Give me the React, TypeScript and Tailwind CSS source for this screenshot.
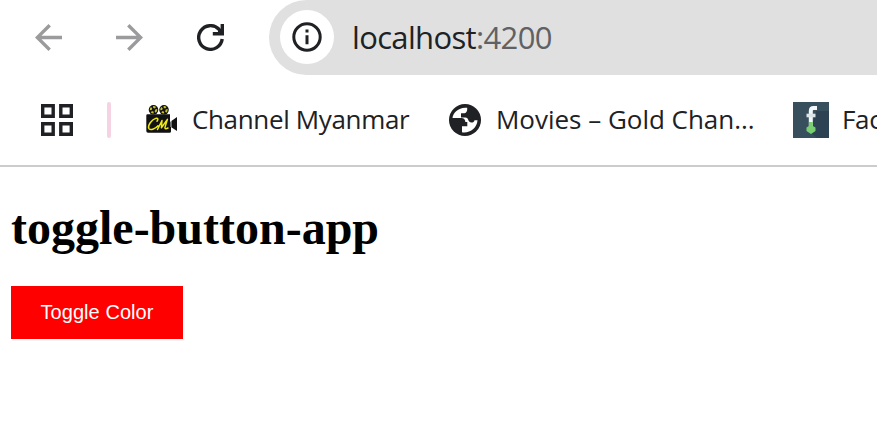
import { useState } from "react";

const uiFont = "font-['Open_Sans','Noto_Sans',sans-serif]";

function ArrowIcon({ flipped = false }: { flipped?: boolean }) {
  return (
    <svg viewBox="4 4 16 16" className={`size-[27px] shrink-0 fill-[#9b9b9d] ${flipped ? "-scale-x-100" : ""}`}>
      <path d="M20 11H7.83l5.59-5.59L12 4l-8 8 8 8 1.41-1.41L7.83 13H20v-2z" />
    </svg>
  );
}

function ReloadIcon() {
  return (
    <svg viewBox="0 0 27 27" className="size-[27px] shrink-0" fill="none" stroke="#202124" strokeWidth="3.4">
      <path d="M25.2 15A11.8 11.8 0 1 1 22 5.3L25 8.8" />
      <path d="M25.3 0V9.7H15.8" />
      <path d="M21 5L25 9H21Z" fill="#202124" stroke="none" />
    </svg>
  );
}

function InfoIcon() {
  return (
    <svg viewBox="0 0 30 30" className="size-[30px]" fill="none" stroke="#202124" strokeWidth="3">
      <circle cx="15" cy="15" r="13.2" />
      <path d="M15 13.3V22.2M15 7.6V10.6" />
    </svg>
  );
}

function AppsIcon() {
  return (
    <svg viewBox="0 0 32 32" className="size-8 shrink-0" fill="none" stroke="#202124" strokeWidth="3.4">
      <path d="M1.7 1.7H12.2V12.2H1.7ZM19.8 1.7H30.3V12.2H19.8ZM1.7 19.8H12.2V30.3H1.7ZM19.8 19.8H30.3V30.3H19.8Z" />
    </svg>
  );
}

function CameraIcon() {
  return (
    <svg viewBox="0 0 32 28" className="mb-0.5 h-7 w-8 shrink-0">
      <g fill="#111">
        <circle cx="7.5" cy="4.8" r="4.8" />
        <circle cx="18" cy="4.8" r="4.8" />
        <path d="M1.5 9.2H24V17L31 12V26L25 22V26.5Q25 27.8 23.5 27.8H2Q.3 27.8.3 26V10.4Q.3 9.2 1.5 9.2Z" />
      </g>
      <path d="M25 16V22" stroke="#fff" strokeWidth=".8" />
      <g fill="none" stroke="#c9c322" strokeWidth="2" strokeDasharray="2.4 1.6">
        <circle cx="7.5" cy="4.8" r="2.7" />
        <circle cx="18" cy="4.8" r="2.7" />
      </g>
      <path
        d="M11 16.2C12.6 14.3 12 12.8 9.6 13.4C5.5 14.6 1.7 20.5 2.7 23.3C3.9 26 9.4 23.8 12 20.7M11.5 24.5L16 15.5L15.4 22.8L21.4 14.4L18.9 22.6Q19 24.5 22 23"
        fill="none"
        stroke="#eee914"
        strokeWidth="1.5"
        strokeLinejoin="round"
        strokeLinecap="round"
      />
    </svg>
  );
}

function GlobeIcon() {
  return (
    <svg viewBox="0 0 32 32" className="size-8 shrink-0">
      <circle cx="16" cy="16" r="16" fill="#202124" />
      <path
        d="M18.2 3.8C10.5 2.6 4 8.3 3.5 14H11.5C15 14 16.3 15.5 16.3 18H18.3V22.3H13V28.2C20.5 29.5 28.2 24 28.5 16.2H25.5C25.3 17.8 24 18.5 22.5 18.5C20.5 18.5 19.5 17 19 15.3Q18.5 13.5 16.5 13.5H12V9.2H15.5C17.5 8.8 18.5 7.3 18.2 3.8Z"
        fill="#fff"
      />
    </svg>
  );
}

function FaceIcon() {
  return (
    <svg viewBox="0 0 36 36" className="size-9 shrink-0">
      <path d="M0 0H36V36H0Z" fill="#38505e" />
      <path d="M23 9H36V36H24L17 30Z" fill="#2d4354" />
      <path d="M24 6H20.5Q17.8 6 17.8 9V25" fill="none" stroke="#f3f7f8" strokeWidth="4" />
      <path d="M13.5 13.5H22.5" stroke="#dbe4e6" strokeWidth="3.6" />
      <path d="M16 20H19.8V24L22.5 25.5V29L18 32L13.5 29V25.5L16 24Z" fill="#79ce70" />
    </svg>
  );
}

export default function App() {
  const [active, setActive] = useState(true);

  return (
    <div className="h-[429px] w-[877px] overflow-hidden bg-white">
      <header className={`h-[167px] border-b-2 border-[#cccccc] text-[#202124] ${uiFont}`}>
        <div className="flex h-[75px] items-center pl-[35px]">
          <nav className="flex items-center gap-[54px] pb-px">
            <ArrowIcon />
            <ArrowIcon flipped />
            <ReloadIcon />
          </nav>
          <div className="ml-[45px] flex h-[75px] flex-1 items-center rounded-l-full bg-[#e0e0e0] pb-px pl-[11px]">
            <span className="flex size-[54px] items-center justify-center rounded-full bg-white">
              <InfoIcon />
            </span>
            <span className="ml-[18px] pb-px text-[31px] leading-10 tracking-[-0.65px] whitespace-nowrap">
              localhost<span className="text-[#606164]">:4200</span>
            </span>
          </div>
        </div>
        <div className="flex h-[90px] items-center overflow-hidden pl-[41px] text-[26px] leading-9 whitespace-nowrap">
          <AppsIcon />
          <span className="ml-[34px] h-9 w-1 shrink-0 rounded-full bg-[#f5d3e3]" />
          <div className="ml-[35px] flex w-[303px] shrink-0 items-center">
            <CameraIcon />
            <span className="ml-[14px] pb-0.5 tracking-[-0.35px]">Channel Myanmar</span>
          </div>
          <div className="flex w-[344px] shrink-0 items-center">
            <GlobeIcon />
            <span className="ml-[15px] pb-0.5 tracking-[-0.02px]">Movies – Gold Chan...</span>
          </div>
          <div className="flex shrink-0 items-center">
            <FaceIcon />
            <span className="ml-[13px] pb-0.5 tracking-[-0.35px]">Facebook</span>
          </div>
        </div>
      </header>
      <main className="pt-[33px] pl-[11px]">
        <h1 className="font-['Liberation_Serif',serif] text-[48px] leading-[55px] font-bold text-black">
          toggle-button-app
        </h1>
        <button
          type="button"
          onClick={() => setActive(!active)}
          className={`mt-[31px] h-[53px] w-[172px] pb-0.5 font-['Liberation_Sans',sans-serif] text-[20px] tracking-[0.05px] text-white ${active ? "bg-[#ff0000]" : "bg-[#008000]"}`}
        >
          Toggle Color
        </button>
      </main>
    </div>
  );
}
